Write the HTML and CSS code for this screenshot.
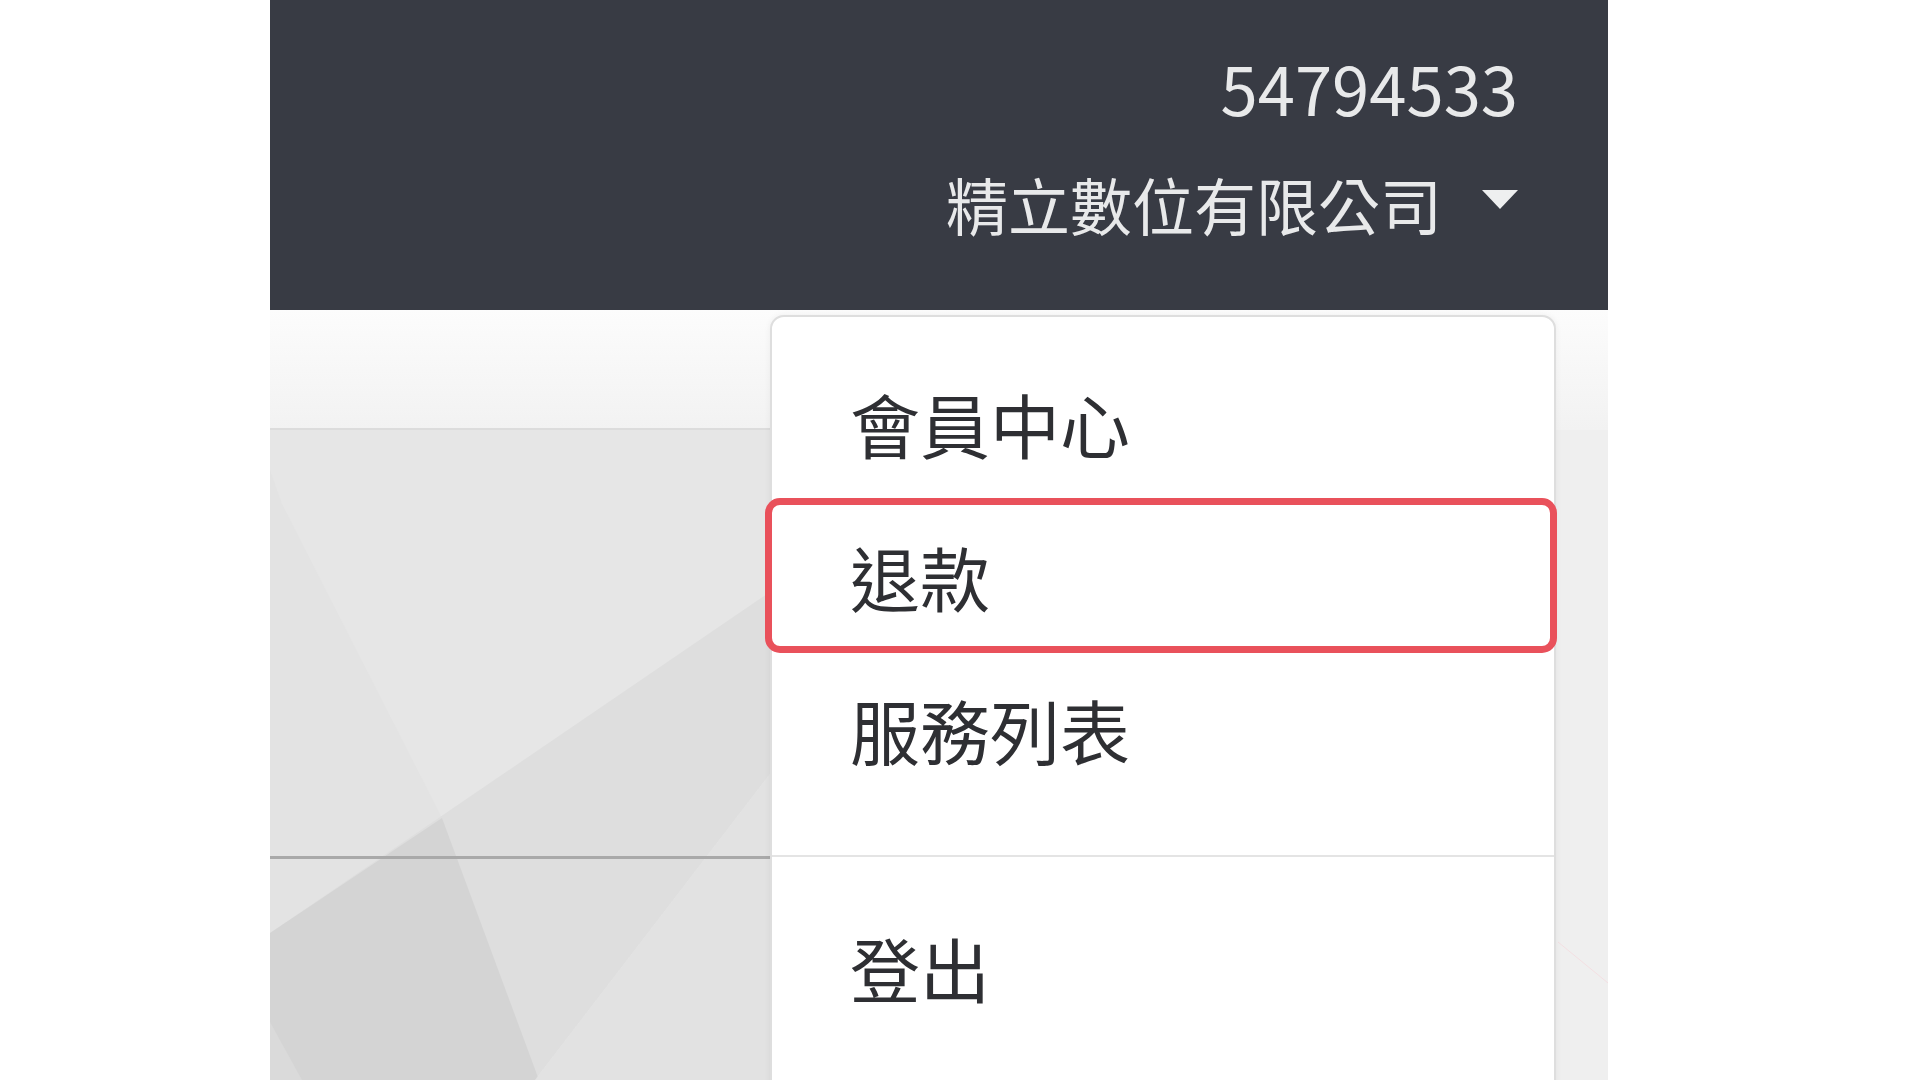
FILE: index.html
```html
<!DOCTYPE html>
<html lang="zh-Hant">
<head>
<meta charset="utf-8">
<title>會員選單</title>
<link rel="stylesheet" href="styles.css">
</head>
<body>
<div class="frame">
  <header class="navbar">
    <div class="account">
      <div class="tax-id">54794533</div>
      <div class="company"><span class="company-name">精立數位有限公司</span><span class="caret"></span></div>
    </div>
  </header>
  <div class="strip"></div>
  <div class="backdrop">
    <svg class="facets" width="1338" height="650" viewBox="0 0 1338 650" xmlns="http://www.w3.org/2000/svg">
      <rect x="0" y="0" width="1338" height="650" fill="#e6e6e6"/>
      <polygon points="0,40 12,74 172,388 0,503" fill="#e3e3e3"/>
      <polygon points="0,503 500,162 500,344 265,650 0,650" fill="#dedede"/>
      <polygon points="0,503 172,388 269,650 0,650" fill="#d4d4d4"/>
      <polygon points="0,592 32,650 0,650" fill="#dadada"/>
      <polygon points="265,650 500,344 500,650" fill="#e2e2e2"/>
      <rect x="0" y="426" width="500" height="3" fill="#a9a9a9"/>
      <rect x="1286" y="0" width="52" height="650" fill="#efefef"/>
      <line x1="1288" y1="512" x2="1338" y2="553" stroke="#f3dfe2" stroke-width="1"/>
    </svg>
  </div>
  <nav class="dropdown">
    <a class="item">會員中心</a>
    <a class="item item--marked">退款</a>
    <a class="item">服務列表</a>
    <div class="divider"></div>
    <a class="item">登出</a>
  </nav>
</div>
</body>
</html>
```

FILE: styles.css
```css
html, body {
  margin: 0;
  padding: 0;
  background: #ffffff;
}

body {
  font-family: "Noto Sans CJK TC", "Noto Sans", sans-serif;
  height: 1080px;
  overflow: hidden;
}

.frame {
  position: relative;
  margin-left: 270px;
  width: 1338px;
  height: 1080px;
  overflow: hidden;
}

.navbar {
  height: 310px;
  box-sizing: border-box;
  background: #383b44;
  display: flex;
  justify-content: flex-end;
  padding: 54px 90px 0 0;
}

.account {
  display: flex;
  flex-direction: column;
  align-items: flex-end;
  color: #e8e9ea;
}

.tax-id {
  font-size: 67px;
  line-height: 66px;
}

.company {
  display: flex;
  align-items: flex-start;
  margin-top: 53px;
  font-size: 62px;
  line-height: 62px;
}

.caret {
  width: 0;
  height: 0;
  border-top: 19px solid #eeeff0;
  border-left: 18px solid transparent;
  border-right: 18px solid transparent;
  margin: 17px 0 0 40px;
}

.strip {
  height: 120px;
  background:
    linear-gradient(#dcdcdc, #dcdcdc) left bottom / 500px 2px no-repeat,
    linear-gradient(#fcfcfc, #f2f2f2);
}

.backdrop {
  height: 650px;
}

.facets {
  display: block;
}

.dropdown {
  position: absolute;
  left: 500px;
  top: 315px;
  width: 786px;
  height: 820px;
  box-sizing: border-box;
  padding-top: 30px;
  background: #ffffff;
  border: 2px solid #dedede;
  border-radius: 14px;
  box-shadow: 0 0 6px rgba(0, 0, 0, 0.06);
}

.item {
  display: block;
  position: relative;
  padding-left: 78px;
  font-size: 70px;
  line-height: 153px;
  color: #2e2f33;
  text-decoration: none;
}

.item--marked::after {
  content: "";
  position: absolute;
  top: -2px;
  bottom: 0;
  left: -7px;
  right: -3px;
  border: 7px solid #e9515b;
  border-radius: 15px;
}

.divider {
  height: 2px;
  background: #e4e4e4;
  margin: 49px 0 34px;
}
```
